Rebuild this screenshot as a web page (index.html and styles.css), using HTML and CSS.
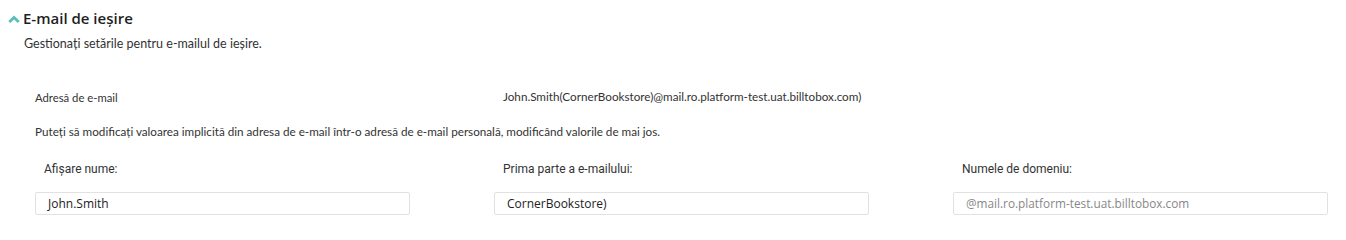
FILE: index.html
```html
<!DOCTYPE html>
<html lang="ro">
<head>
<meta charset="utf-8">
<link rel="stylesheet" href="styles.css">
</head>
<body>
<section class="panel">
  <div class="head">
    <svg class="chev" width="12" height="8" viewBox="0 0 12 8"><path d="M1.3 7 L6 2.4 L10.7 7" fill="none" stroke="#5dbdb9" stroke-width="2.8"/></svg>
    <h2 class="title">E-mail de ieșire</h2>
  </div>
  <p class="desc">Gestionați setările pentru e-mailul de ieșire.</p>
  <div class="addr">
    <span class="addr-label">Adresă de e-mail</span>
    <span class="addr-value">John.Smith(CornerBookstore)@mail.ro.platform-test.uat.billtobox.com)</span>
  </div>
  <p class="help">Puteți să modificați valoarea implicită din adresa de e-mail într-o adresă de e-mail personală, modificând valorile de mai jos.</p>
  <div class="fields">
    <div class="field">
      <label class="flabel">Afișare nume:</label>
      <div class="input">John.Smith</div>
    </div>
    <div class="field">
      <label class="flabel">Prima parte a e-mailului:</label>
      <div class="input">CornerBookstore)</div>
    </div>
    <div class="field">
      <label class="flabel">Numele de domeniu:</label>
      <div class="input muted">@mail.ro.platform-test.uat.billtobox.com</div>
    </div>
  </div>
</section>
</body>
</html>
```

FILE: styles.css
```css
html, body { margin: 0; padding: 0; background: #fff; }
.panel { padding: 9px 0 0 0; width: 1346px; }
.head { display: flex; align-items: center; height: 18px; padding-left: 8px; }
.chev { margin-right: 3px; margin-top: 2px; }
.title { margin: 0; font-family: "Open Sans", sans-serif; font-weight: 600; font-size: 15px; color: #1f1f1f; line-height: 18px; }
.desc { margin: 9px 0 0 24px; font-family: Lato, sans-serif; font-size: 12.5px; color: #333; line-height: 16px; }
.addr { display: flex; align-items: center; margin: 36px 0 0 35px; height: 16px; font-family: Lato, sans-serif; color: #333; }
.addr-label { width: 468px; font-size: 11.3px; margin-top: 3px; }
.addr-value { font-size: 11.7px; }
.help { margin: 19px 0 0 35px; font-family: Lato, sans-serif; font-size: 11.7px; color: #333; line-height: 16px; }
.fields { display: grid; grid-template-columns: 459px 459px 459px; margin: 22px 0 0 35px; }
.field { display: flex; flex-direction: column; }
.flabel { padding-left: 9px; font-family: Roboto, sans-serif; font-size: 12px; color: #333; line-height: 16px; height: 16px; }
.input { margin-top: 15px; width: 375px; height: 23px; box-sizing: border-box; border: 1px solid #e2e2e2; border-radius: 2px; padding-left: 12px; font-family: "Open Sans", sans-serif; font-size: 12px; color: #222; line-height: 21px; }
.muted { color: #888; font-size: 11.8px; }
```
